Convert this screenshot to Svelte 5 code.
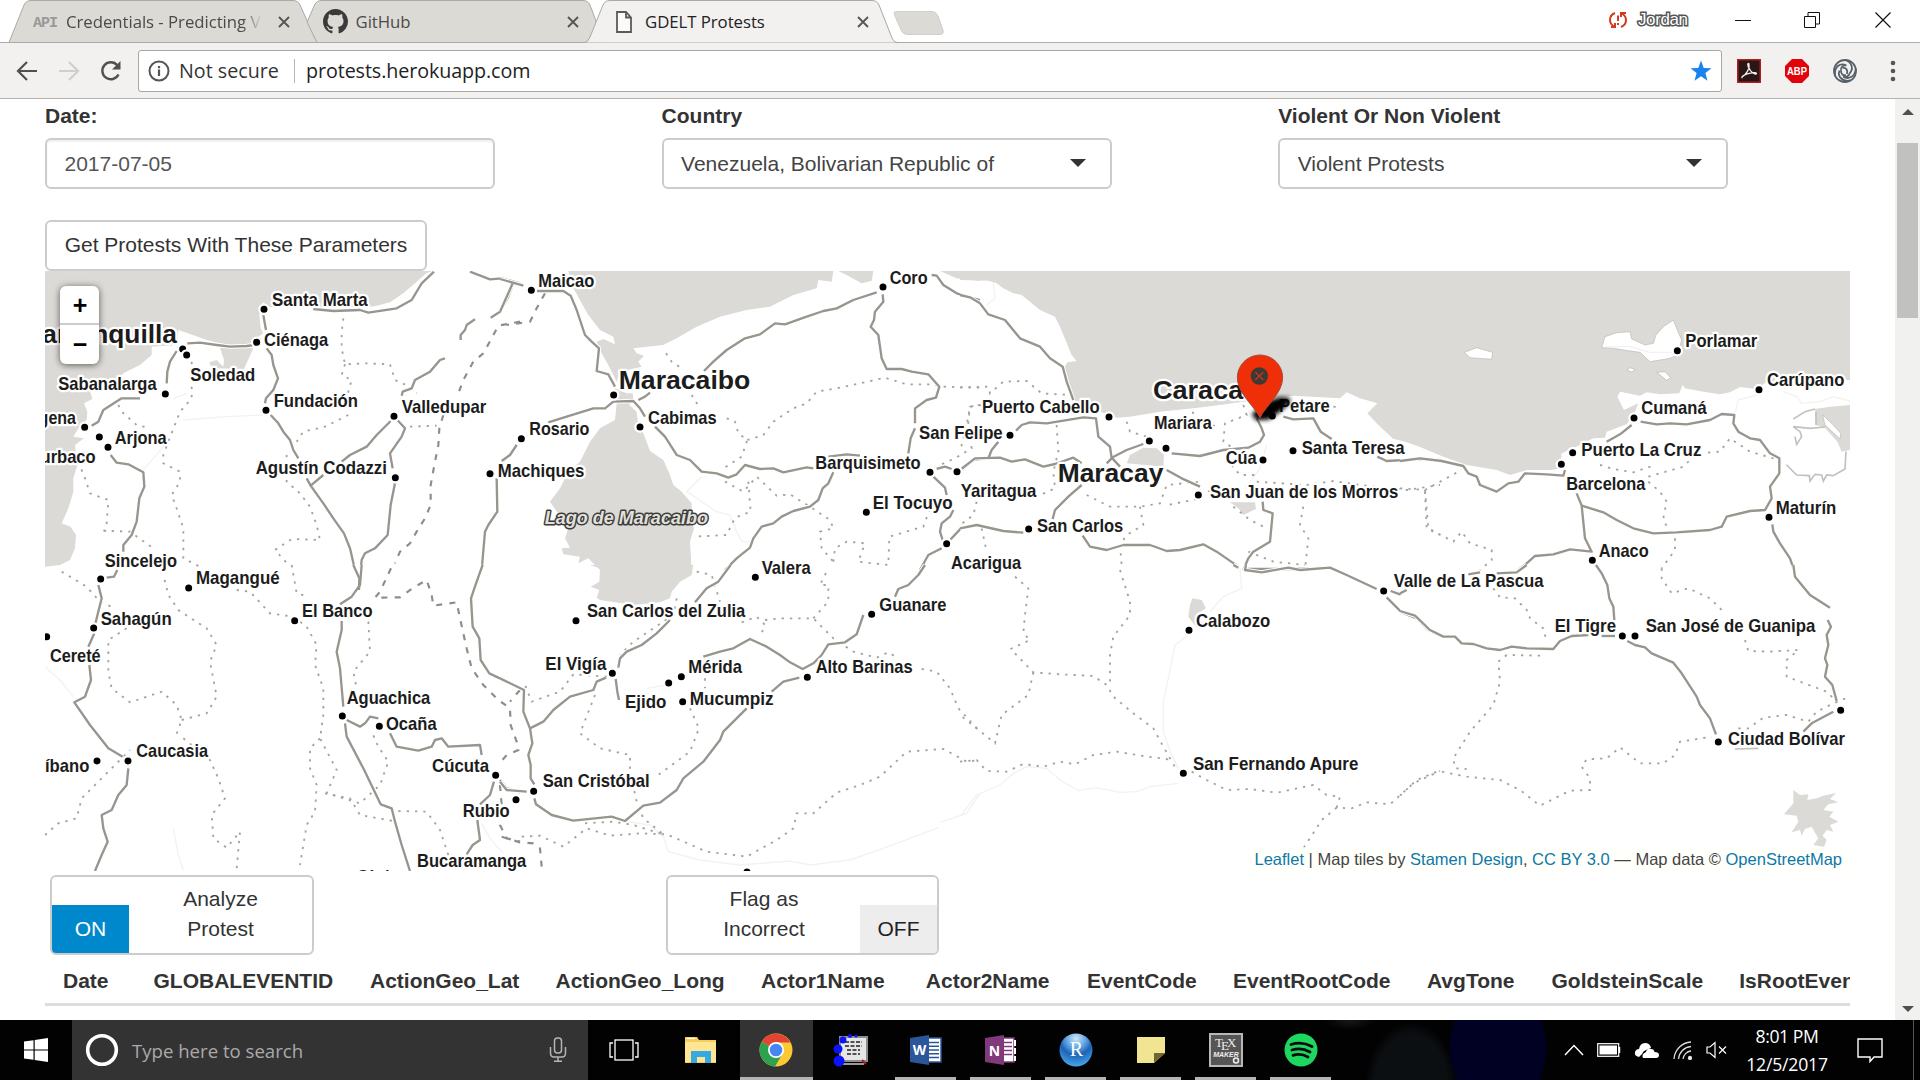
<script>
  const tabs = [
    { icon: 'api', title: 'Credentials - Predicting V', fade: true },
    { icon: 'github', title: 'GitHub' },
    { icon: 'page', title: 'GDELT Protests', active: true }
  ];

  const headers = [
    ['Date', 90.5], ['GLOBALEVENTID', 216.5], ['ActionGeo_Lat', 185.5], ['ActionGeo_Long', 205.5],
    ['Actor1Name', 164.8], ['Actor2Name', 161.2], ['EventCode', 146], ['EventRootCode', 194],
    ['AvgTone', 124.5], ['GoldsteinScale', 187.8], ['IsRootEvent', 150]
  ];

  const apps = [
    { id: 'taskview' }, { id: 'explorer' }, { id: 'chrome', open: true, active: true }, { id: 'molecule' },
    { id: 'word', open: true }, { id: 'onenote', open: true }, { id: 'rstudio', open: true },
    { id: 'notes', open: true }, { id: 'tex', open: true }, { id: 'spotify', open: true }
  ];

  // Map tiles: each has its own origin and is drawn at three times the screen scale.
  const tiles = [
    {
      x: 40, y: 265,
      water: [
        'M15,18 L1180,18 1160,24 1130,50 1090,85 1050,112 1010,122 985,126 690,126 668,112 658,150 662,190 670,205 655,215 640,238 600,243 560,240 500,225 450,207 415,195 412,240 335,245 335,270 300,300 250,325 240,338 180,350 150,378 157,402 132,415 142,440 140,465 118,485 100,515 132,520 105,540 112,600 100,640 100,680 85,730 65,775 92,785 108,810 105,850 90,885 60,900 15,905Z',
        'M540,248 L552,285 550,305 530,285 508,292 515,310 612,312 640,250 590,246Z'
      ],
      roads: [
        'M820,132 L880,138 960,135 985,143 1070,130 1115,105 1145,55 1182,20', 'M1290,20 L1350,43 1385,40 1440,55',
        'M1420,55 L1405,95 1380,140 1352,158', 'M1305,163 L1280,180 1275,195 1262,210 1262,225',
        'M1215,280 L1200,285 1170,320 1125,345 1115,370 1088,380 1085,392', 'M442,235 L480,233 530,240 570,245 620,243 645,240',
        'M670,150 L678,195', 'M680,250 L695,270 700,300 714,340 700,375 678,400 675,415',
        'M692,450 L715,475 730,500 750,525 760,555 775,580', 'M800,640 L812,662 850,630', 'M812,662 L850,715 880,760 912,805 930,850 945,915',
        'M1052,468 L1010,510 980,545 930,570 905,590', 'M1072,465 L1095,490 1085,515 1050,565 1058,610', 'M1065,655 L1052,720 1043,810 1005,850 975,865 965,885 962,915',
        'M410,258 L390,290 382,320 380,355', 'M300,400 L245,400 190,435 175,470 155,482',
        'M212,570 L230,593 265,598 310,622 313,665 298,700 290,770 275,810 250,840 250,860', 'M1430,540 L1410,570 1390,588', 'M1370,640 L1372,740 1345,780 1335,800 1325,915'
      ],
      borders: ['M1440,170 L1375,182 1355,220 1330,265 1300,290 1270,345 1255,385', 'M1210,450 L1198,490 1195,540 1185,590 1172,660 1172,720 1155,760 1130,800 1110,835 1080,860 1065,895'],
      dotted: [
        'M910,160 L905,200 905,250 915,298 975,295 1050,298 1065,345 1110,365 1130,385', 'M915,298 L905,330 935,345 925,380 920,400',
        'M925,450 L855,485 790,500 770,530', 'M1110,485 L1190,482', 'M455,290 L455,400 420,440 385,530 370,570 370,595 420,620 420,650 395,690 410,730 430,790 430,880 490,910',
        'M235,420 L245,440 290,480 330,490', 'M115,590 L135,640 150,685 205,705 200,775 195,800', 'M190,797 L270,800 340,850',
        'M740,570 L740,650 780,685 810,725 830,780 840,825 755,822 705,855 750,905'
      ],
      rivers: ['M440,385 L400,400', 'M385,530 L340,580 310,615', 'M430,465 L560,455 670,450'],
      dots: [[672, 133], [650, 232], [428, 252], [440, 270], [376, 387], [134, 487], [178, 516], [204, 547], [678, 436], [1062, 454], [1066, 638], [1350, 626]],
      labels: [
        ['Santa Marta', 697, 984, 122], ['Ciénaga', 673, 866, 242], ['Soledad', 452, 647, 347], ['Sabanalarga', 56, 351, 376],
        ['Fundación', 702, 955, 425], ['Valledupar', 1086, 1340, 443], ['Cartagena', -126, 109, 477], ['Arjona', 225, 381, 537],
        ['Turbaco', -24, 168, 593], ['Agustín Codazzi', 648, 1042, 627], ['Barranquilla', -49, 412, 234, 79], ['Sincelejo', 195, 412, 905]
      ]
    },
    {
      x: 500, y: 265,
      water: [
        'M205,18 L1000,18 995,50 955,45 950,70 880,90 810,125 740,135 660,155 590,185 530,220 490,240 400,250 410,265 432,272 415,290 425,305 360,320 350,350 330,310 305,265 290,230 310,222 345,238 340,215 300,195 265,150 245,115 215,60Z',
        'M345,370 L380,385 398,385 400,400 388,420 410,440 415,480 430,505 450,558 490,585 510,630 520,660 545,680 575,715 575,770 582,790 570,830 575,915 L300,915 265,880 235,895 240,875 190,868 185,850 210,848 195,820 205,790 150,710 180,670 205,620 240,590 270,530 300,490 345,465 350,415Z',
        'M1015,18 L1040,30 1085,55 1115,48 1120,18Z', 'M1320,18 L1370,40 1440,48 1440,18Z'
      ],
      roads: [
        'M0,42 L70,62', 'M38,55 L0,140', 'M110,78 L190,78 212,92 230,135 245,180 255,210 275,230 297,250 290,318 325,328 345,365',
        'M612,318 L640,290 680,255 735,220 780,208 825,175 855,178 920,155 970,138 1010,130 1060,105 1130,82',
        'M145,472 L200,455 280,430 315,430 340,410 400,408 420,430 435,455', 'M415,405 L435,395 450,383',
        'M465,485 L495,515 530,570 570,585 605,620 650,625 685,638 710,628 735,600 780,612 820,610 850,622 920,607 940,610', 'M985,575 L1040,568 1080,572',
        'M1148,88 L1150,110 1125,140 1122,165 1112,185 1135,210 1145,280 1160,312 1205,312 1235,320 1285,328 1318,365 1308,398 1280,405 1245,430 1245,475', 'M1245,490 L1232,520 1225,565',
        'M1295,30 L1310,32 1330,60 1370,85 1440,105', 'M1000,622 L985,655 968,670 955,705 930,725 880,738 845,755 820,775 785,785 760,820 750,848 710,880 675,915',
        'M1300,635 L1335,668 1340,690', 'M1360,735 L1350,755 1325,775 1320,800 1328,825', 'M1350,825 L1385,788 1440,780', 'M1325,850 L1285,870 1260,915',
        'M1310,612 L1335,605 1355,612', 'M1385,615 L1420,585 1440,582', 'M50,540 L30,570 5,588'
      ],
      borders: ['M135,85 L110,130 90,170 20,180'],
      dotted: [
        'M498,265 L515,290 545,310', 'M575,390 L600,430', 'M680,460 L705,470 715,505 742,525 725,575 670,610',
        'M742,525 L790,510 820,470 880,430 920,415 950,380 1010,370 1080,355 1155,338 1220,358 1290,358 1330,365 1440,368',
        'M675,650 L730,680 770,635 830,692 870,688 930,725 990,765 1000,790 960,800 965,850 1000,890', 'M745,650 L752,740 705,758 680,810 580,815',
        'M1000,890 L1005,850 1040,830 1095,835 1075,890 1165,900 1168,815 1270,785 1290,730', 'M1440,420 L1410,425 1405,475 1415,550 1365,580 1320,600'
      ],
      rivers: ['M605,635 L560,680 620,720 650,740 690,750 710,800 725,830 760,830'],
      dots: [[94, 76], [341, 390], [420, 486], [64, 521], [1149, 66], [1290, 622], [1371, 620], [1099, 742], [1340, 836]],
      labels: [
        ['Maicao', 116, 284, 66], ['Coro', 1170, 1284, 56], ['Maracaibo', 357, 752, 373, 79], ['Cabimas', 445, 651, 476], ['Rosario', 89, 269, 511],
        ['Machiques', -6, 254, 637], ['Barquisimeto', 947, 1263, 612], ['El Tocuyo', 1119, 1359, 732], ['Lago de Maracaibo', 135, 625, 778, 55, 'lake']
      ]
    },
    {
      x: 960, y: 265,
      water: [
        'M0,18 L1440,18 1440,570 1390,550 1340,530 1300,522 1255,480 1222,445 1252,415 1200,400 1160,382 1140,400 1000,392 850,410 780,420 700,430 600,440 510,455 470,458 420,440 345,408 320,340 312,310 322,292 350,288 335,270 300,185 285,155 240,135 210,110 185,90 160,85 130,70 110,55 85,47 0,45Z',
        'M500,595 L510,570 550,548 590,550 612,570 610,605Z', 'M810,712 L885,712 888,732 850,750 835,730Z'
      ],
      roads: [
        'M0,90 L30,97 60,115 85,148 135,165 180,220 240,245 270,280 308,305 320,350 340,405', 'M168,497 L185,480 210,472 260,475 370,457 408,460 415,515 450,545 455,580 440,595',
        'M115,530 L95,555 85,580', 'M0,615 L45,580 120,578 155,590 195,583 250,605 285,597 340,578 365,595', 'M455,578 L500,555 550,537', 'M455,578 L480,605',
        'M635,565 L720,573 790,555 865,548 900,530 912,510 905,490 890,460', 'M620,615 L665,640 720,665', 'M365,660 L325,695 285,735 278,762', 'M0,790 L50,780 130,798 190,803',
        'M368,812 L390,845 440,855 490,840 570,840 620,858 660,855 730,838 770,860 835,905', 'M908,710 L910,735 938,745 930,830 880,860 865,880 850,915',
        'M970,455 L1000,463 1060,460 1082,500 1115,522', 'M1252,575 L1280,588 1370,583 1440,585', 'M850,912 L1000,912 1100,908 1130,915'
      ],
      borders: [],
      dotted: [
        'M0,368 L85,365 90,385 130,350 200,348 245,385 330,390', 'M290,480 L295,560 280,620 285,670 220,700', 'M65,420 L30,425 20,480 0,560', 'M500,470 L510,500 560,515',
        'M700,440 L690,470 780,485', 'M850,420 L860,450 795,475 790,530 820,550', 'M815,600 L840,630 900,630', 'M380,690 L450,725 540,725 600,715 620,660 720,650',
        'M540,725 L550,780 500,810 480,840 485,900', 'M770,660 L720,700 625,720', 'M820,725 L870,765 920,790', 'M890,650 L1040,660 1120,648 1200,660 1340,675 1440,660',
        'M1030,725 L1020,780 1045,820 1035,915', 'M865,860 L940,890 1035,900', 'M1395,680 L1400,790 1440,810', 'M50,710 L40,750 0,780', 'M65,790 L80,860', 'M1120,425 L1145,428'
      ],
      rivers: ['M100,55 L105,100 80,120', 'M920,540 L900,610 855,670'],
      dots: [[447, 456], [568, 528], [618, 550], [150, 511], [937, 453], [999, 557], [909, 585], [715, 690], [206, 792]],
      labels: [
        ['Puerto Cabello', 67, 420, 444], ['San Felipe', -122, 129, 521], ['Mariara', 583, 756, 492], ['Caracas', 580, 896, 402, 79], ['Petare', 958, 1110, 441],
        ['Santa Teresa', 1026, 1335, 567], ['Cúa', 798, 891, 596], ['Maracay', 294, 611, 651, 79], ['San Juan de los Morros', 751, 1316, 700],
        ['Yaritagua', 3, 230, 697], ['San Carlos', 232, 491, 800], ['Acarigua', -26, 184, 911]
      ]
    },
    {
      x: 1400, y: 265,
      water: [
        'M0,18 L1350,18 1350,345 1100,350 1070,372 1020,366 990,382 960,388 910,380 855,370 848,360 838,385 780,388 740,382 720,392 660,380 652,395 672,435 715,415 705,440 680,478 620,500 615,518 580,520 520,550 485,565 480,595 490,610 450,615 380,615 330,630 290,615 200,600 130,575 60,545 0,525Z',
        'M1350,420 L1290,425 1245,432 1248,480 1275,488 1312,530 1325,560 1350,555Z'
      ],
      land: [
        'M605,248 L615,215 650,203 690,200 695,222 735,240 760,235 768,210 790,185 820,165 832,195 845,225 832,270 810,280 750,290 720,262 690,258 640,250Z',
        'M193,262 L230,248 278,262 275,283 210,278Z', 'M680,315 L690,308 706,314 695,321Z', 'M770,322 L795,320 812,338 800,346Z', 'M1268,450 L1300,480 1322,505 1320,522 1275,480Z'
      ],
      shore: ['M1180,462 L1215,440 1245,432', 'M1248,440 L1248,480', 'M1180,485 L1200,500 1205,515 1190,538 1185,515', 'M1180,485 L1230,490 1275,486', 'M1160,600 L1190,630 1228,632 1230,648 1245,628 1265,630 1270,648 1280,630 1300,632 1335,612 1338,560'],
      roads: [
        'M0,588 L60,580 125,588 190,603 205,625 230,635 240,660 290,680 325,655 355,650 375,625 440,628 490,632 495,615', 'M620,530 L660,508 695,480',
        'M722,470 L770,478 810,475 860,478 930,465 965,447 1003,450 1000,475 1015,500 1050,520 1080,525 1110,565 1138,580 1138,625 1110,665 1115,700 1095,735 1050,738 980,755 965,785 930,795 830,802 760,805 700,790 650,765 610,742 545,722',
        'M530,685 L545,722 555,820 575,860 510,853 460,868 405,873 380,895 355,915', 'M1117,778 L1120,800 1140,835 1170,880 1182,915', 'M585,900 L600,915'
      ],
      borders: [],
      dotted: [
        'M0,670 L75,675 175,620', 'M75,675 L85,790 160,830 185,800 210,835 275,855 275,885 240,915', 'M600,600 L640,612 700,622 765,600',
        'M745,635 L850,605 890,565 960,560 990,520 1050,560 1120,580 1160,600', 'M745,650 L780,680 800,710 790,760 800,785', 'M825,820 L825,855 785,910'
      ],
      rivers: ['M1005,445 L1015,405 1070,390', 'M1150,380 L1190,395 1205,415 1260,410 1300,395 1350,408', 'M615,245 L690,245 750,262 820,262'],
      dots: [[832, 257], [1077, 374], [702, 459], [518, 563], [484, 598], [1107, 757], [577, 886]],
      labels: [
        ['Porlamar', 857, 1073, 247], ['Carúpano', 1102, 1334, 364], ['Cumaná', 725, 921, 448], ['Puerto La Cruz', 545, 905, 573], ['Barcelona', 500, 737, 674],
        ['Maturín', 1128, 1310, 746], ['Anaco', 597, 747, 876]
      ]
    },
    {
      x: 40, y: 565,
      water: [],
      roads: [
        'M940,0 L958,40 957,75', 'M965,0 L960,60 935,95 900,118', 'M905,168 L905,195 890,260 900,310 910,425', 'M232,15 L222,35 200,38', 'M175,60 L185,100 165,180',
        'M163,205 L145,245', 'M148,300 L153,345 135,395 103,412 150,480 205,550 248,575', 'M265,610 L260,660 235,690 215,735 185,750 190,790 203,830 185,870 165,918',
        'M1328,0 L1310,50 1293,100 1298,185 1318,220 1322,285 1348,325 1400,350 1440,370', 'M920,465 L960,485 975,475 990,455 1015,460', 'M1050,505 L1070,545 1135,557 1175,545 1185,525 1205,520 1225,545 1320,540 1325,570',
        'M915,475 L920,515 970,610 1022,718 1055,730 1065,770 1085,840 1110,918', 'M1362,650 L1350,690 1320,718', 'M1312,765 L1320,825 1298,840 1280,868', 'M1380,645 L1400,670 1440,682'
      ],
      borders: ['M1053,10 L1020,80 1005,98 1080,97 1120,68 1160,45 1175,90 1180,122 1250,112 1260,160 1280,250 1295,310 1330,360 1375,405 1410,430 1412,480 1430,530 1435,555 1400,570 1375,600', 'M1380,660 L1385,720 1380,780 1400,820 1440,830', 'M1440,375 L1410,410'],
      dotted: [
        'M65,20 L140,65 180,110 225,130', 'M260,190 L205,225 205,320 215,370 270,412 365,380 410,420 425,465 405,520', 'M425,465 L500,445 530,395 510,290 530,240 500,190 415,135 385,90 370,30',
        'M590,75 L630,80 690,145 760,155 800,185 830,240 825,300 850,370 850,450 840,520 890,615 860,685 960,715 1020,660 1045,590 1015,545 995,500',
        'M840,520 L810,550 810,610 830,660 825,740 800,780 780,900', 'M985,170 L990,260 940,320 950,370', 'M15,810 L55,775 110,760 125,700 215,610 270,555',
        'M430,520 L510,585 535,640 555,700 515,750 520,820 560,848 600,800 590,910', 'M855,685 L930,700 960,750 1060,768', 'M1075,738 L1160,740 1200,795 1225,870', 'M755,0 L770,85 805,95'
      ],
      rivers: ['M15,305 L60,345 100,395', 'M400,790 L415,870 430,915', 'M1325,775 L1350,820 1390,865'],
      dots: [[182, 42], [446, 69], [764, 167], [161, 189], [20, 215], [907, 453], [1018, 484], [171, 588], [264, 588], [1367, 631], [1428, 704]],
      labels: [
        ['Magangué', 469, 720, 58], ['Sahagún', 183, 396, 179], ['El Banco', 787, 999, 156], ['Cereté', 31, 183, 292], ['Aguachica', 921, 1172, 417], ['Ocaña', 1039, 1191, 495],
        ['Caucasia', 290, 505, 576], ['Montelíbano', -145, 149, 620], ['Cúcuta', 1177, 1348, 621], ['Rubio', 1269, 1410, 756], ['Bucaramanga', 1132, 1460, 906], ['Girón', 950, 1085, 955]
      ]
    },
    {
      x: 500, y: 565,
      water: ['M270,0 L580,0 575,30 540,50 515,80 510,100 480,112 400,120 300,105 290,98 298,75 272,65 298,50 300,10Z'],
      roads: [
        'M692,0 L655,50 620,70 585,112', 'M510,165 L470,205 425,240 380,260 360,280 355,308', 'M318,338 L290,350 280,375 210,395 160,435 130,470 90,490', 'M347,342 L352,380 357,405',
        'M0,340 L72,375 70,440 90,490 97,535 85,570 92,600 92,640 103,658', 'M103,700 L108,718 155,750 220,767 335,755 375,768 430,722 480,713 530,675 550,640 610,590 660,525 670,500 740,430',
        'M815,380 L850,350 898,338', 'M610,275 L660,260 700,250 750,222 800,245 840,270 870,292 908,312 940,295 965,270 985,238 1035,232 1070,208 1090,150', 'M1185,95 L1195,72 1225,60 1255,30 1275,0', 'M0,650 L20,675 80,680'
      ],
      borders: ['M5,815 L60,832 100,835 120,850 125,905'],
      dotted: [
        'M590,20 L635,30 660,110', 'M530,100 L520,150 400,230 360,270', 'M320,335 L220,328 180,380 95,410 75,360', 'M285,390 L240,505 300,550 390,570 390,620 410,710 430,760 490,808',
        'M570,430 L597,490 570,560 465,637', 'M65,815 L120,812 190,845 260,790 330,812 420,805 500,808 620,860 740,875 830,825 880,790 890,745 940,745 1010,683 1080,660 1140,635 1220,560 1330,552 1400,590 1440,585',
        'M255,775 L340,770 400,780 490,808', 'M725,172 L770,155 795,180 780,215', 'M795,165 L840,160 940,160 1000,220 1060,260 1130,278 1165,262 1195,280', 'M1265,312 L1310,320 1350,370 1375,430 1440,500',
        'M940,160 L985,110 985,60 960,60 985,10', 'M615,340 L615,370'
      ],
      rivers: ['M380,770 L450,780 490,815 505,860 600,885 720,900 870,888 930,900 1050,885 1150,850 1230,820 1315,788', 'M1320,772 L1400,745 1440,685', 'M440,370 L500,360'],
      dots: [[766, 37], [1115, 148], [228, 167], [337, 325], [544, 335], [506, 354], [548, 410], [922, 337], [101, 679], [741, 921]],
      labels: [
        ['Valera', 786, 933, 25], ['Guanare', 1139, 1340, 137], ['San Carlos del Zulia', 262, 737, 155], ['El Vigía', 137, 320, 314], ['Mérida', 566, 727, 323], ['Alto Barinas', 948, 1239, 325],
        ['Ejido', 376, 500, 430], ['Mucumpiz', 570, 822, 421], ['San Cristóbal', 129, 450, 667]
      ]
    },
    {
      x: 960, y: 565,
      water: ['M697,100 L725,105 738,130 715,145 712,190 685,155 690,120Z'],
      roads: ['M820,0 L835,8', 'M858,0 L855,15 905,22 985,8 1020,15 1110,8 1160,30 1250,72', 'M1280,97 L1325,142 1370,160 1405,195 1440,212', 'M1292,78 L1320,88 1340,75'],
      borders: [],
      dotted: [
        'M165,35 L205,70 195,150 190,205 210,225 145,255', 'M165,265 L220,322 300,328 400,333 440,360 460,395 520,445 580,490 610,545 650,615', 'M480,15 L510,110 510,150 460,215 450,270 450,350',
        'M220,322 L205,390 125,450 105,535 0,450', 'M0,590 L50,585 80,618 140,620 190,597 250,605 300,590 345,598 400,570 470,560 550,573 640,585',
        'M695,620 L740,645 800,675 870,672 950,683 1060,660 1100,690 1140,695 1130,728 1175,730 1220,712 1290,718 1360,655 1440,618', 'M1130,728 L1085,765 1030,850'
      ],
      rivers: ['M685,210 L645,240 625,340 610,410 610,500 635,570 655,610', 'M0,755 L50,690 120,660 160,625 200,605 260,610 300,645 355,677 410,668 480,682 530,680 570,665 655,655', 'M750,140 L790,95 845,70 840,10'],
      dots: [[1271, 78], [687, 196], [670, 625]],
      labels: [['Calabozo', 709, 932, 185], ['San Fernando Apure', 700, 1196, 615]]
    },
    {
      x: 1400, y: 565,
      water: ['M1180,675 L1200,690 1225,688 1222,705 1250,700 1270,692 1308,684 1290,702 1315,712 1285,718 1270,735 1300,740 1288,755 1315,770 1290,780 1300,800 1280,795 1268,812 1280,825 1272,845 1240,840 1255,820 1235,785 1215,792 1205,812 1200,795 1175,802 1195,770 1190,752 1152,748 1180,715Z'],
      roads: [
        'M205,28 L240,22', 'M290,25 L350,22 380,0', 'M0,85 L20,75', 'M0,138 L45,152 90,195 130,215 165,215 185,235 220,237 260,250 300,255 335,245 380,250 460,252 480,228 515,213 565,210', 'M605,213 L645,213',
        'M588,0 L605,25 622,60 628,100 640,125 643,165', 'M682,228 L705,240 735,247 755,265 820,293 845,325 890,395 900,420 930,460 948,508', 'M1180,0 L1185,35 1230,90 1290,128',
        'M1283,165 L1293,185 1280,210 1285,240 1275,280 1282,300 1275,335 1297,360 1310,408', 'M1300,440 L1235,475 1210,500'
      ],
      borders: [],
      dotted: [
        'M280,70 L300,97 345,100 385,140 390,160 430,190 440,230', 'M420,272 L320,270 295,290 300,350 280,420 210,500 160,580 165,610 200,612',
        'M0,692 L50,645 115,618 200,635 300,645 360,675 420,722 510,677 570,675 570,640 545,605 560,583 620,580 660,547 720,595 790,595 825,570 840,530 935,515',
        'M785,10 L785,40 815,85 865,70 930,100 975,145', 'M1035,225 L1045,258 1110,260 1195,255 1160,285 1160,335 1280,380 1310,410', 'M1015,490 L1045,490 1090,458 1160,450 1225,470 1250,440 1300,415 1350,395'
      ],
      rivers: [],
      shore: ['M1005,552 L1075,550'],
      dots: [[667, 213], [705, 213], [955, 531], [1322, 436]],
      labels: [['Valle de La Pascua', -18, 432, 67], ['El Tigre', 465, 649, 202], ['San José de Guanipa', 738, 1247, 202], ['Ciudad Bolívar', 985, 1336, 541]]
    }
  ];
</script>

<div class="screen">
  <header class="tabstrip">
    <svg class="tabshapes" width="960" height="43" viewBox="0 0 960 43">
      <path d="M9,42.5 L24,5 Q26,.5 31,.5 L293,.5 Q298,.5 300,5 L317,42.5Z" fill="#dcdad5" stroke="#aaa9a6" />
      <path d="M307,22 L315,4 Q317,.5 321,.5 L583,.5 Q588,.5 590,5 L604,42.5 L317,42.5Z" fill="#dcdad5" stroke="#aaa9a6" />
      <path d="M0,42.5 H585 Q588,42 590,37 L603,5 Q605,.5 610,.5 L872,.5 Q877,.5 879,5 L892,38 Q894,42.5 897,42.5 H960" fill="#f2f1ef" stroke="#aaa9a6" />
      <path d="M896,11.5 H932 Q936,11.5 938,16 L943,30 Q944,34.5 940,34.5 H907 Q903,34.5 901,30 L895,16 Q893,11.5 896,11.5Z" fill="#dcdad5" stroke="#d0cfcb" />
    </svg>
    <div class="tabs">
      {#each tabs as tab}
        <div class="tab" class:active={tab.active}>
          <span class="favicon">
            {#if tab.icon === 'api'}
              <span class="api">API</span>
            {:else if tab.icon === 'github'}
              <svg width="25" height="25" viewBox="0 0 16 16"><path fill="#3a3a3a" d="M8 0C3.58 0 0 3.58 0 8c0 3.54 2.29 6.53 5.47 7.59.4.07.55-.17.55-.38 0-.19-.01-.82-.01-1.49-2.01.37-2.53-.49-2.69-.94-.09-.23-.48-.94-.82-1.13-.28-.15-.68-.52-.01-.53.63-.01 1.08.58 1.23.82.72 1.21 1.87.87 2.33.66.07-.52.28-.87.51-1.07-1.78-.2-3.64-.89-3.64-3.95 0-.87.31-1.59.82-2.15-.08-.2-.36-1.02.08-2.12 0 0 .67-.21 2.2.82.64-.18 1.32-.27 2-.27s1.36.09 2 .27c1.53-1.04 2.2-.82 2.2-.82.44 1.1.16 1.92.08 2.12.51.56.82 1.27.82 2.15 0 3.07-1.87 3.75-3.65 3.95.29.25.54.73.54 1.48 0 1.07-.01 1.93-.01 2.2 0 .21.15.46.55.38A8.01 8.01 0 0 0 16 8c0-4.42-3.58-8-8-8z" /></svg>
            {:else}
              <svg width="25" height="24" viewBox="0 0 25 24"><path d="M5,2 H14 L19,7.500 V22 H5Z M14,2 V7.500 H19" fill="#fafafa" stroke="#5a5a5a" stroke-width="1.800" /></svg>
            {/if}
          </span>
          <span class="title" class:fade={tab.fade}>{tab.title}</span>
          <svg class="close" width="12" height="12" viewBox="0 0 12 12"><path d="M1,1 L11,11 M11,1 L1,11" stroke="#555" stroke-width="1.800" /></svg>
        </div>
      {/each}
    </div>
    <div class="winctl">
      <svg width="20" height="18" viewBox="0 0 20 18"><path d="M7,2 Q2,4 2,9 Q2,13 6,15.500 M3,16 H7 V12 M13,16 Q18,14 18,9 Q18,5 14,2.500 M18,2 H13 V6" fill="none" stroke="#d23b22" stroke-width="2" /><path d="M10,4.500 V10 M10,12 V14" stroke="#d23b22" stroke-width="2" /></svg>
      <span class="user">Jordan</span>
      <svg class="min" width="16" height="16"><path d="M0,8.500 H16" stroke="#111" /></svg>
      <svg class="restore" width="16" height="16"><path d="M.5,4.500 H11.500 V15.500 H.5Z M4,4 V.5 H15.500 V12 H12" fill="none" stroke="#111" /></svg>
      <svg class="quit" width="16" height="16"><path d="M.5,.5 L15.500,15.500 M15.500,.5 L.5,15.500" stroke="#111" stroke-width="1.200" /></svg>
    </div>
  </header>

  <div class="toolbar">
    <div class="nav">
      <svg width="22" height="22" viewBox="0 0 22 22"><path d="M21,11 H2.500 M11,2 L2,11 L11,20" fill="none" stroke="#505050" stroke-width="2.200" /></svg>
      <svg width="22" height="22" viewBox="0 0 22 22"><path d="M1,11 H19.500 M11,2 L20,11 L11,20" fill="none" stroke="#d0cfcd" stroke-width="2.200" /></svg>
      <svg width="22" height="22" viewBox="0 0 22 22"><path d="M18.500,14.500 A8.500,8.500 0 1 1 17.300,5.200" fill="none" stroke="#505050" stroke-width="2.400" /><path d="M20.500,1 V9.500 H12Z" fill="#505050" /></svg>
    </div>
    <div class="omnibox">
      <svg width="22" height="22" viewBox="0 0 22 22"><circle cx="11" cy="11" r="9.500" fill="none" stroke="#555" stroke-width="2" /><path d="M11,9.500 V16 M11,6 V8.200" stroke="#555" stroke-width="2.200" /></svg>
      <span class="secure">Not secure</span>
      <span class="rule"></span>
      <span class="url">protests.herokuapp.com</span>
      <svg class="star" width="22" height="22" viewBox="0 0 22 22"><path d="M11,.5 L13.700,7.900 21.500,8.200 15.400,13 17.500,20.700 11,16.300 4.500,20.700 6.600,13 .5,8.200 8.300,7.900Z" fill="#1a84ee" /></svg>
    </div>
    <div class="ext">
      <svg width="24" height="24" viewBox="0 0 24 24"><rect x=".75" y=".75" width="22.500" height="22.500" fill="#2b1616" stroke="#b11e20" stroke-width="1.500" /><path d="M5,18 C10,15 13,9 12,5 C10.500,3 10,7 13,11 C15,14 19,16 19.500,14.500 C19.500,13 11,13.500 6.500,16.500 C4.500,18 4.500,19 5.500,18.500" fill="none" stroke="#eee" stroke-width="1.300" /></svg>
      <svg width="26" height="26" viewBox="0 0 26 26"><path d="M8,1 H18 L25,8 V18 L18,25 H8 L1,18 V8Z" fill="#e2040b" /><text x="3" y="17.300" class="abp" textLength="20" lengthAdjust="spacingAndGlyphs">ABP</text></svg>
      <svg width="24" height="24" viewBox="0 0 24 24" fill="none" stroke="#57606a" stroke-width="1.800"><circle cx="12" cy="12" r="11" /><path d="M12,1 C19,3 21,10 16.500,14.500 M22.800,10 C22,18 15,21 10,17.500 M17,21.500 C10,23 4,18 6.500,11.500 M2,16 C1,8 7,3 13.500,6.500 M8,12 A4.500,4.500 0 0 1 13.500,6.500 M16.500,14.500 A4.500,4.500 0 0 1 10,17.500" /><path d="M9.500,9 C13,8 15,11 14,15 M8,12 C8,15 10,17 13,16" /></svg>
      <svg width="6" height="22" viewBox="0 0 6 22" fill="#555"><circle cx="3" cy="3" r="2.300" /><circle cx="3" cy="11" r="2.300" /><circle cx="3" cy="19" r="2.300" /></svg>
    </div>
  </div>

  <div class="viewport">
    <main>
      <div class="filters">
        <div class="field"><span class="label">Date:</span><div class="input date">2017-07-05</div></div>
        <div class="field"><span class="label">Country</span><div class="input">Venezuela, Bolivarian Republic of<i class="caret"></i></div></div>
        <div class="field"><span class="label">Violent Or Non Violent</span><div class="input">Violent Protests<i class="caret"></i></div></div>
      </div>
      <button class="fetch">Get Protests With These Parameters</button>

      <div class="map">
        <svg width="1805" height="600" viewBox="45 271 1805 600">
          <defs><filter id="soft" x="-50%" y="-50%" width="200%" height="200%"><feGaussianBlur stdDeviation="7" /></filter></defs>
          {#each tiles as t}
            <g transform="translate({t.x} {t.y}) scale(.33333)">
              {#each t.water as d}<path class="water" {d} />{/each}
              {#each t.land ?? [] as d}<path class="land" {d} />{/each}
              {#each t.shore ?? [] as d}<path class="shore" {d} />{/each}
              {#each t.rivers as d}<path class="river" {d} />{/each}
              {#each t.dotted as d}<path class="dotted" {d} />{/each}
              {#each t.borders as d}<path class="border" {d} />{/each}
              {#each t.roads as d}<path class="road casing" {d} />{/each}
              {#each t.roads as d}<path class="road" {d} />{/each}
            </g>
          {/each}
          {#each tiles as t}
            <g transform="translate({t.x} {t.y}) scale(.33333)">
              {#each t.dots as [cx, cy]}<circle class="town" {cx} {cy} r="14" />{/each}
              {#each t.labels as [name, x1, x2, y, size, kind]}
                <text class={kind ?? 'place'} x={x1 - 1} y={y + 0.5} font-size={size ?? 53} textLength={x2 - x1} lengthAdjust="spacingAndGlyphs">{name}</text>
              {/each}
            </g>
          {/each}
          <g transform="translate(960 265) scale(.33333)">
            <path d="M880,448 L925,412 960,400 985,402 985,412 960,435 925,460 890,462Z" filter="url(#soft)" stroke="#000" stroke-width="8" />
            <path d="M900,458 C885,425 832,385 832,338 A68,68 0 0 1 968,338 C968,385 915,425 900,458Z" fill="#ee2f08" stroke="#a84b3c" stroke-width="3" />
            <circle cx="898" cy="333" r="26" fill="#3d3a36" />
            <path d="M886,321 L910,345 M910,321 L886,345" stroke="#c8331a" stroke-width="4" />
          </g>
        </svg>
        <div class="zoomctl"><span>+</span><span>−</span></div>
        <div class="credit"><a>Leaflet</a> | Map tiles by <a>Stamen Design</a>, <a>CC BY 3.0</a> — Map data © <a>OpenStreetMap</a></div>
      </div>

      <div class="switches">
        <div class="switch on"><span class="state">ON</span><span class="text">Analyze<br />Protest</span></div>
        <div class="switch off"><span class="text">Flag as<br />Incorrect</span><span class="state">OFF</span></div>
      </div>

      <div class="thead">
        {#each headers as [name, width]}<span style="width:{width}px">{name}</span>{/each}
      </div>
    </main>
    <aside class="scrollbar"><i class="up"></i><div class="thumb"></div><i class="down"></i></aside>
  </div>

  <footer class="taskbar">
    <div class="start">
      <svg width="24" height="24" viewBox="0 0 24 24" fill="#fff"><path d="M0,3.500 L9.500,2.200 V11.400 H0Z M10.700,2 L24,0 V11.400 H10.700Z M0,12.600 H9.500 V21.800 L0,20.500Z M10.700,12.600 H24 V24 L10.700,22Z" /></svg>
    </div>
    <div class="search">
      <svg width="34" height="34" viewBox="0 0 34 34"><circle cx="17" cy="17" r="14.300" fill="none" stroke="#fff" stroke-width="3.600" /></svg>
      <span>Type here to search</span>
      <svg class="mic" width="18" height="26" viewBox="0 0 18 26" fill="none" stroke="#b5b5b5" stroke-width="1.500"><rect x="5.500" y="1" width="7" height="15" rx="3" /><path d="M1.500,10 V16 Q1.500,20 5,20 H13 Q16.500,20 16.500,16 V10 M9,20 V24 M5,24.300 H13" /></svg>
    </div>
    <div class="apps">
      {#each apps as app}
        <div class="app" class:active={app.active} class:open={app.open}>
          {#if app.id === 'taskview'}
            <svg class="view" width="30" height="22" viewBox="0 0 30 22" fill="none" stroke="#fff" stroke-width="1.300"><rect x="6" y="1" width="18" height="20" /><path d="M4,4 H1 V18 H4 M26,4 H29 V18 H26" /></svg>
          {:else if app.id === 'explorer'}
            <svg width="32" height="28" viewBox="0 0 32 28"><path d="M0,1 H12 L14,4 H31 V27 H0Z" fill="#f5cf5a" /><path d="M0,6 H31 V26 H0Z" fill="#ffe694" /><path d="M2,2.500 H10" stroke="#fff" /><path d="M6,27 V15 H26 V27 H20 V21 H12 V27Z" fill="#35a9e0" /></svg>
          {:else if app.id === 'chrome'}
            <svg width="34" height="34" viewBox="0 0 34 34"><circle cx="17" cy="17" r="16.500" fill="#fcc934" /><path d="M17,17 L2.700,8.700 A16.500,16.500 0 0 1 31.300,9.500 H17Z" fill="#e24435" /><path d="M17,17 L2.700,8.700 A16.500,16.500 0 0 0 16,33.500 L23.500,21Z" fill="#2da14f" /><circle cx="17" cy="17" r="8" fill="#fff" /><circle cx="17" cy="17" r="6.300" fill="#4886ef" /></svg>
          {:else if app.id === 'molecule'}
            <svg width="36" height="34" viewBox="0 0 36 34"><rect x="7" y="4" width="27" height="24" fill="#e6e6e6" stroke="#8d8d8d" stroke-width="2" /><path d="M12,9 H29 M12,13 H29 M14,17 H27 M14,21 H27" stroke="#222" stroke-width="1.600" stroke-dasharray="4 1.500" /><path d="M3,31 H31" stroke="#999" stroke-width="2" /><g fill="#0a12ff"><circle cx="6" cy="28" r="5.500" /><circle cx="5" cy="16" r="4.500" /><circle cx="10" cy="7" r="3.500" /><circle cx="17" cy="3" r="2" /><circle cx="23" cy="3" r="1.500" /></g><path d="M29,27 L33,31" stroke="#b32020" stroke-width="2" /></svg>
          {:else if app.id === 'word'}
            <svg width="34" height="32" viewBox="0 0 34 32"><rect x="17" y="4" width="15" height="24" fill="#fff" stroke="#2b579a" stroke-width="1.500" /><path d="M20,8.500 H30 M20,12.200 H30 M20,16 H30 M20,19.700 H30 M20,23.500 H30" stroke="#2b579a" stroke-width="1.600" /><path d="M1,4 L20,1 V31 L1,28Z" fill="#2b579a" /><text x="10.500" y="21" text-anchor="middle" class="office">W</text></svg>
          {:else if app.id === 'onenote'}
            <svg width="34" height="32" viewBox="0 0 34 32"><rect x="17" y="4" width="13" height="24" fill="#fff" stroke="#80397b" stroke-width="1.500" /><path d="M20,8.500 H28 M20,12.500 H28 M20,16.500 H28 M20,20.500 H28" stroke="#80397b" stroke-width="1.600" /><path d="M31,6 V12 M31,14 V20 M31,22 V27" stroke="#fff" stroke-width="2" /><path d="M1,4 L20,1 V31 L1,28Z" fill="#80397b" /><text x="10.500" y="22" text-anchor="middle" class="office">N</text></svg>
          {:else if app.id === 'rstudio'}
            <svg width="34" height="34" viewBox="0 0 34 34"><defs><radialGradient id="ball" cx=".5" cy=".15" r=".9"><stop offset="0" stop-color="#cfe6fa" /><stop offset=".35" stop-color="#5b9fe0" /><stop offset=".55" stop-color="#1d62b5" /><stop offset="1" stop-color="#4db1f2" /></radialGradient></defs><circle cx="17" cy="17" r="16.500" fill="url(#ball)" /><text x="17.500" y="23" text-anchor="middle" class="r">R</text></svg>
          {:else if app.id === 'notes'}
            <svg width="28" height="28" viewBox="0 0 28 28"><path d="M0,1 H28 V17 L17,27 H0Z" fill="#f2e591" /><path d="M28,17 H17 V27Z" fill="#6e672f" /></svg>
          {:else if app.id === 'tex'}
            <svg width="34" height="34" viewBox="0 0 34 34"><rect x="1" y="1" width="32" height="32" fill="#555" stroke="#b8b8b8" stroke-width="2" /><text x="6" y="14" class="tex">T<tspan dx="-2" dy="3">E</tspan><tspan dx="-2" dy="-3">X</tspan></text><text x="17" y="23.500" text-anchor="middle" class="maker">MAKER</text><circle cx="27" cy="27.500" r="2.500" fill="none" stroke="#eee" stroke-width="1.500" /></svg>
          {:else}
            <svg width="34" height="34" viewBox="0 0 34 34"><circle cx="17" cy="17" r="16.500" fill="#1ed760" /><path d="M7,11.500 Q18,8 28,13.500 M8,17 Q17.500,14 26,19 M9,22.300 Q17,20 24,24" fill="none" stroke="#0b0b0b" stroke-width="2.800" stroke-linecap="round" /></svg>
          {/if}
        </div>
      {/each}
    </div>
    <div class="tray">
      <svg width="20" height="12" viewBox="0 0 20 12"><path d="M1,11 L10,1.500 L19,11" fill="none" stroke="#fff" stroke-width="1.500" /></svg>
      <svg width="24" height="14" viewBox="0 0 24 14"><rect x=".7" y=".7" width="21" height="12.600" fill="none" stroke="#fff" stroke-width="1.200" /><rect x="2.500" y="2.500" width="17.500" height="9" fill="#fff" /><path d="M22.500,4 V10" stroke="#fff" stroke-width="1.500" /></svg>
      <svg width="26" height="17" viewBox="0 0 26 17"><path d="M5,15 Q0,14 1,10 Q2,7 5,7 Q6,1 11,1 Q16,1 17,6 L12,8 Q9,9 8,12Z" fill="#fff" /><path d="M9,16 Q7,12 12,10 Q13,6 17,7 Q20,7 20.500,10 Q25,10 25,13 Q25,16 22,16Z" fill="#fff" /></svg>
      <svg width="20" height="20" viewBox="0 0 20 20" fill="none" stroke="#ddd" stroke-width="1.300"><path d="M1,19 A18,18 0 0 1 18,2 M5.500,19 A13.500,13.500 0 0 1 18,6.500 M10,19 A9,9 0 0 1 18,11" /><circle cx="17" cy="18" r="1.500" fill="#fff" /></svg>
      <svg width="22" height="18" viewBox="0 0 22 18" fill="none" stroke="#fff" stroke-width="1.200"><path d="M1,6 H4 L9,1.500 V16.500 L4,12 H1Z M13,5.500 L20,12.500 M20,5.500 L13,12.500" /></svg>
    </div>
    <div class="clock"><span class="time">8:01 PM</span><span>12/5/2017</span></div>
    <svg class="notice" width="26" height="26" viewBox="0 0 26 26"><path d="M1,2 H25 V20 H17 L13,24.500 V20 H1Z" fill="none" stroke="#fff" stroke-width="1.400" /></svg>
    <i class="peek"></i>
  </footer>
</div>

<style>
  :global(body) { margin: 0; background: #fff; overflow: hidden; }
  .screen { width: 1920px; height: 1080px; display: flex; flex-direction: column; overflow: hidden; background: #fff; font-family: "Liberation Sans", Arial, sans-serif; }
  svg { display: block; flex: none; }

  .tabstrip { position: relative; height: 43px; display: flex; justify-content: space-between; box-sizing: border-box; border-bottom: 1px solid #b0afad; font-family: "Open Sans", "Noto Sans", sans-serif; }
  .tabshapes { position: absolute; left: 0; top: 0; }
  .tabs { position: relative; display: flex; padding-left: 33px; }
  .tab { width: 289.5px; height: 43px; display: flex; align-items: center; box-sizing: border-box; padding-right: 33px; color: #4a4a4a; font-size: 16.800px; }
  .tab.active { color: #222; }
  .favicon { width: 33px; flex: none; display: flex; }
  .api { font: bold 15px "Liberation Mono", monospace; color: #999; letter-spacing: -1px; padding-top: 3px; }
  .title { width: 196px; flex: none; white-space: nowrap; overflow: hidden; letter-spacing: -.05px; }
  .fade { mask-image: linear-gradient(to right, #000 90%, transparent); }
  .close { margin-left: auto; }
  .winctl { display: flex; align-items: center; padding: 0 29px 3px 0; }
  .user { width: 50px; margin: 0 1px 0 10px; font: 17px "Liberation Sans", sans-serif; letter-spacing: -.4px; color: #fff; -webkit-text-stroke: 3px #555; paint-order: stroke fill; }
  .min { margin-left: 46px; }
  .restore { margin-left: 53px; }
  .quit { margin-left: 55px; }

  .toolbar { height: 56px; box-sizing: border-box; background: #f2f1ef; border-bottom: 1px solid #b3b2b0; display: flex; align-items: center; }
  .nav { width: 122px; padding: 0 0 0 16px; display: flex; gap: 20px; box-sizing: border-box; }
  .omnibox { margin-left: 16px; width: 1584px; height: 42px; box-sizing: border-box; border: 1px solid #a8a7a5; border-radius: 3px; background: #fff; display: flex; align-items: center; padding: 0 9px; font: 19.700px "Open Sans", "Noto Sans", sans-serif; color: #333; }
  .secure { margin-left: 9px; width: 116px; white-space: nowrap; }
  .rule { width: 1px; height: 24px; background: #b5b5b5; margin-left: -1px; }
  .url { margin-left: 11px; color: #222; letter-spacing: -.08px; }
  .star { margin-left: auto; }
  .ext { display: flex; align-items: center; margin-left: 15px; gap: 23px; }
  .ext svg:last-child { margin-left: 10px; }
  .abp { font: bold 11.500px "Liberation Sans", sans-serif; fill: #fff; }

  .viewport { height: 921px; display: flex; }
  main { width: 1805px; padding: 0 45px; flex: none; display: flex; flex-direction: column; align-items: flex-start; font-size: 21px; color: #333; }
  .filters { display: flex; gap: 166.6px; padding-top: 5px; }
  .field { width: 450px; display: flex; flex-direction: column; }
  .label { height: 34px; line-height: 24px; font-weight: bold; white-space: nowrap; }
  .input { height: 51px; box-sizing: border-box; border: 2px solid #ccccc8; border-radius: 6px; padding: 0 24px 0 17.500px; display: flex; align-items: center; justify-content: space-between; color: #444; white-space: nowrap; }
  .date { color: #555; box-shadow: inset 0 2px 2px rgba(0, 0, 0, .06); }
  .caret { border: 8px solid transparent; border-top-color: #333; border-bottom-width: 0; margin-bottom: 2px; }
  .fetch { margin: 31px 0 0; height: 51px; width: 382px; box-sizing: border-box; padding: 0 0 2px; border: 2px solid #ccccc8; border-radius: 6px; background: #fff; color: #333; font: 21px "Liberation Sans", Arial, sans-serif; white-space: nowrap; }

  .map { position: relative; width: 1805px; height: 600px; overflow: hidden; background: #fff; }
  .water { fill: #dbdad6; }
  .land { fill: #fff; stroke: #b9b8b3; stroke-width: 2; }
  .shore { fill: none; stroke: #c2c1bd; stroke-width: 5; }
  .river { fill: none; stroke: #f3f2f0; stroke-width: 4; }
  .dotted { fill: none; stroke: #a5a39f; stroke-width: 5.500; stroke-dasharray: 7 18; }
  .border { fill: none; stroke: #8f8d87; stroke-width: 6.500; stroke-dasharray: 18 22; }
  .road { fill: none; stroke: #98958e; stroke-width: 7; stroke-linejoin: round; }
  .casing { stroke: #fff; stroke-width: 13; }
  .town { fill: #000; stroke: #fff; stroke-width: 7; }
  .place { font-family: "Liberation Sans", Arial, sans-serif; font-weight: bold; fill: #1c1c1c; stroke: #fff; stroke-width: 14; stroke-linejoin: round; paint-order: stroke; }
  .lake { font-family: "Liberation Sans", Arial, sans-serif; font-weight: bold; font-style: italic; fill: #e2e1dd; stroke: #3c3c3a; stroke-width: 9; stroke-linejoin: round; paint-order: stroke; }
  .zoomctl { position: absolute; left: 15px; top: 15px; width: 39px; height: 78px; border-radius: 6px; background: #fff; box-shadow: 0 1px 7px rgba(0, 0, 0, .6); display: flex; flex-direction: column; font-weight: bold; color: #000; font-size: 25px; }
  .zoomctl span { height: 39px; line-height: 39px; padding-left: 1px; text-align: center; box-sizing: border-box; }
  .zoomctl span:first-child { border-bottom: 2px solid #ccc; }
  .credit { position: absolute; right: 0; bottom: 0; height: 24px; line-height: 25px; padding: 0 8px 0 7.500px; font-size: 16.500px; background: rgba(255, 255, 250, .7); white-space: nowrap; color: #444; }
  .credit a { color: #0d78a8; }

  .switches { display: flex; padding: 4px 0 0 5px; height: 80px; }
  .switch { height: 80px; box-sizing: border-box; border: 2px solid #ccccc8; border-radius: 6px; display: flex; align-items: flex-end; overflow: hidden; background: #fff; line-height: 30px; text-align: center; }
  .on { width: 264px; margin-right: 352px; }
  .off { width: 273px; }
  .state { height: 48px; line-height: 48px; width: 77px; flex: none; }
  .on .state { background: #0088cc; color: #fff; }
  .off .state { background: #eeeded; color: #222; }
  .text { flex: 1; align-self: stretch; padding-top: 7px; }
  .thead { width: 1805px; height: 51px; box-sizing: border-box; padding-left: 18px; border-bottom: 3px solid #ddd; display: flex; overflow: hidden; font-weight: bold; line-height: 52px; white-space: nowrap; }
  .thead span { flex: none; }

  .scrollbar { width: 25px; background: #f1f1ef; display: flex; flex-direction: column; align-items: center; box-sizing: border-box; }
  .up { margin-top: 10px; border: 6px solid transparent; border-top-width: 0; border-bottom-color: #505050; }
  .thumb { margin-top: 28px; width: 21px; height: 175px; background: #c1c1c0; }
  .down { margin: auto 0 8px; border: 6px solid transparent; border-bottom-width: 0; border-top-color: #505050; }

  .taskbar { position: relative; height: 60px; display: flex; align-items: center; color: #fff; font-family: "Open Sans", "Noto Sans", sans-serif; background: radial-gradient(ellipse 50px 66px at 1498px 28px, #010124 92%, transparent 100%), radial-gradient(ellipse 46px 66px at 1411px 68px, #0c0f12 80%, transparent 100%), radial-gradient(ellipse 26px 10px at 1350px 0, #181818, transparent), #020203; }
  .start { width: 72px; display: flex; justify-content: center; }
  .search { width: 516px; height: 60px; box-sizing: border-box; padding: 0 21px 0 13px; background: #333; display: flex; align-items: center; font-size: 18.600px; color: #aaa; }
  .search span { margin-left: 13px; }
  .mic { margin-left: auto; }
  .apps { display: flex; height: 60px; }
  .app { width: 75px; height: 60px; display: flex; align-items: center; justify-content: center; position: relative; }
  .view { margin-right: 3px; }
  .active.app { background: linear-gradient(to right, transparent 2px, #333 2px); }
  .open::after { content: ""; position: absolute; left: 7px; right: 7px; bottom: 0; height: 3px; background: #b4b4b4; }
  .active.open::after { left: 2px; right: 0; }
  .office { font: bold 14px "Open Sans", sans-serif; fill: #fff; }
  .r { font: 20px "Liberation Serif", serif; fill: #fff; }
  .tex { font: 13px "Liberation Serif", serif; fill: #eee; }
  .maker { font: italic bold 7px "Liberation Sans", sans-serif; fill: #eee; }
  .tray { margin-left: 226px; display: flex; align-items: center; gap: 13px; width: 165px; }
  .clock { width: 110px; margin-left: 3px; display: flex; flex-direction: column; align-items: center; font-size: 17.600px; line-height: 28px; letter-spacing: -.2px; }
  .time { letter-spacing: -.4px; }
  .notice { margin-left: 15px; }
  .peek { width: 1px; height: 60px; background: #555; margin-left: auto; margin-right: 6px; }
</style>
